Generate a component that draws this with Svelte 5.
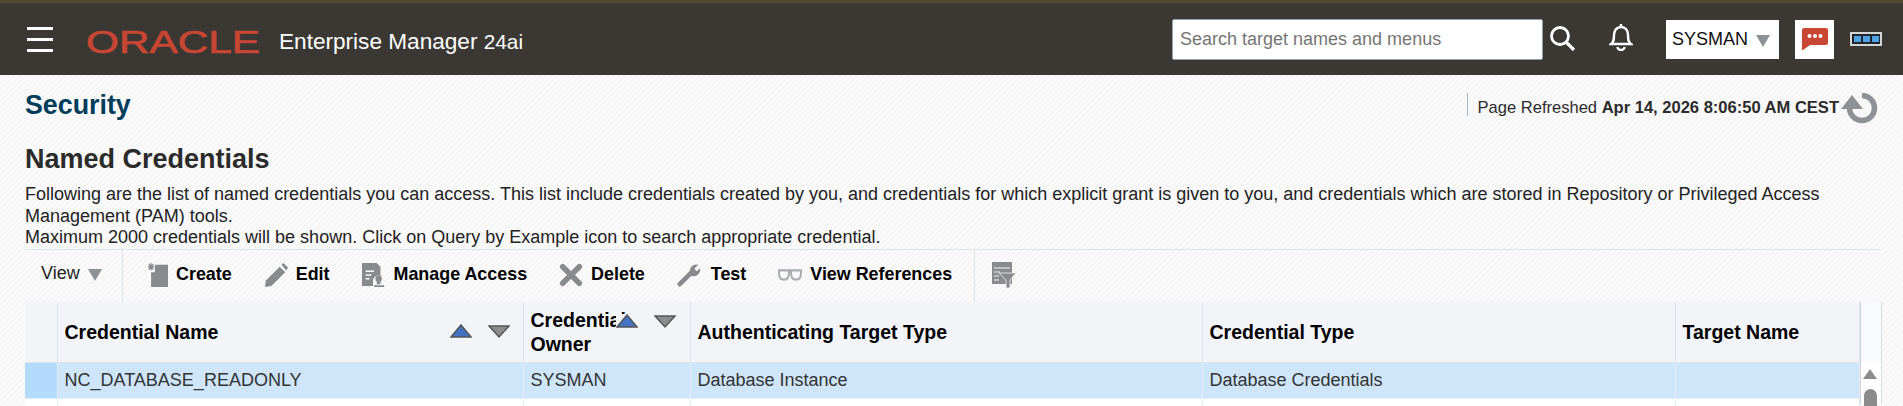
<script lang="ts">
    const actions = [
        { key: "create", label: "Create" },
        { key: "edit", label: "Edit" },
        { key: "access", label: "Manage Access" },
        { key: "delete", label: "Delete" },
        { key: "test", label: "Test" },
        { key: "refs", label: "View References" }
    ];
</script>

<div class="page">
    <header class="topbar">
        <button class="burger" aria-label="Menu"><span></span><span></span><span></span></button>
        <svg class="oracle" width="180" height="37" viewBox="0 0 180 37" aria-label="Oracle">
            <text x="0" y="29" textLength="174" lengthAdjust="spacingAndGlyphs" font-size="32" fill="#c74634" stroke="#c74634" stroke-width="0.700" font-family="Liberation Sans, sans-serif">ORACLE</text>
        </svg>
        <div class="product">Enterprise Manager <small>24ai</small></div>
        <div class="top-right">
            <input class="search" type="text" placeholder="Search target names and menus" />
            <svg class="search-icon" width="27" height="26" viewBox="0 0 27 26">
                <circle cx="11" cy="11" r="8.500" fill="none" stroke="#fff" stroke-width="2.800" />
                <path d="M17 17l8 8" stroke="#fff" stroke-width="3.200" />
            </svg>
            <svg class="bell" width="24" height="27" viewBox="0 0 24 27">
                <path d="M2 20c3-2 3-5 3-9 0-5 3-8 7-8s7 3 7 8c0 4 0 7 3 9z" fill="none" stroke="#fff" stroke-width="2.400" />
                <path d="M12 0v3" stroke="#fff" stroke-width="2.400" />
                <path d="M8.500 23a3.500 3 0 0 0 7 0" fill="none" stroke="#fff" stroke-width="2.400" />
            </svg>
            <div class="user">SYSMAN <i class="caret"></i></div>
            <div class="feedback">
                <svg width="26" height="22" viewBox="0 0 26 22">
                    <path d="M2 0h22a2 2 0 0 1 2 2v13a2 2 0 0 1-2 2H8l-7 5H0V2a2 2 0 0 1 2-2z" fill="#c74634" />
                    <circle cx="7.500" cy="8" r="2" fill="#fff" /><circle cx="13" cy="8" r="2" fill="#fff" /><circle cx="18.500" cy="8" r="2" fill="#fff" />
                </svg>
            </div>
            <div class="status"><span></span><span></span><span></span></div>
        </div>
    </header>

    <main class="content">
        <div class="title-row">
            <h1>Security</h1>
            <div class="refreshed">
                <span>Page Refreshed <b>Apr 14, 2026 8:06:50 AM CEST</b></span>
                <svg width="37" height="31" viewBox="0 0 37 31">
                    <path d="M21 2.500A12.500 12.500 0 1 1 8.500 15" fill="none" stroke="#8c9296" stroke-width="5.500" />
                    <path d="M0 16L11 2l11 14z" fill="#8c9296" />
                </svg>
            </div>
        </div>

        <h2>Named Credentials</h2>
        <p class="desc">Following are the list of named credentials you can access. This list include credentials created by you, and credentials for which explicit grant is given to you, and credentials which are stored in Repository or Privileged Access Management (PAM) tools.<br />Maximum 2000 credentials will be shown. Click on Query by Example icon to search appropriate credential.</p>

        <div class="toolbar">
            <div class="view">View <i class="caret"></i></div>
            <div class="actions">
                {#each actions as a}
                    <button class="action {a.key}">
                        <svg class="ico" viewBox="0 0 26 26" preserveAspectRatio="none">
                            {#if a.key === "create"}
                                <path d="M9 2h17v24H4V10h5z" fill="#878b8e" />
                                <path d="M4 0v8M0 4h8M1 1l6 6M7 1L1 7" stroke="#878b8e" stroke-width="1.500" />
                            {:else if a.key === "edit"}
                                <path d="M1 26l1-7L17 4l6 6L8 25z" fill="#878b8e" />
                                <path d="M19 2l2-2 5 5-2 3z" fill="#878b8e" />
                            {:else if a.key === "access"}
                                <path d="M0 0h16l4 4v10a6 6 0 0 0-8 7v4H0z" fill="#878b8e" />
                                <path d="M4 9h9M4 13h6M4 17h4" stroke="#fff" stroke-width="1.500" />
                                <circle cx="18" cy="17" r="3.500" fill="#878b8e" />
                                <path d="M16 20h4v3h-4zM13 24h11v2H13z" fill="#878b8e" />
                            {:else if a.key === "delete"}
                                <path d="M4 4l18 18M22 4L4 22" stroke="#878b8e" stroke-width="6" stroke-linecap="round" />
                            {:else if a.key === "test"}
                                <path d="M3 23L16 10" stroke="#878b8e" stroke-width="5" stroke-linecap="round" />
                                <path d="M14 10a7 7 0 0 1 9-8l-4 4 2 3 4-3a7 7 0 0 1-9 8z" fill="#878b8e" />
                            {:else}
                                <path d="M12 9h2" stroke="#a9adb0" stroke-width="2" />
                                <path d="M1 8h11c0 7-1 10-5.500 10S1 15 1 8zM14 8h11c0 7-1 10-5.500 10S14 15 14 8z" fill="none" stroke="#a9adb0" stroke-width="2.200" />
                            {/if}
                        </svg>
                        {a.label}
                    </button>
                {/each}
            </div>
            <div class="qbe">
                <svg width="24" height="26" viewBox="0 0 24 26">
                    <path d="M0 0h20v22H0z" fill="#878b8e" />
                    <path d="M2 6h16M2 10h6M2 14h5M2 18h5" stroke="#f4f4f4" stroke-width="1" />
                    <path d="M7 11h17l-6 7v8h-4v-8z" fill="#878b8e" stroke="#f4f4f4" stroke-width="0.800" />
                </svg>
            </div>
        </div>

        <div class="grid-wrap">
            <table>
                <colgroup>
                    <col style="width:32px" /><col style="width:466px" /><col style="width:167px" /><col style="width:512px" /><col style="width:473px" /><col style="width:184px" />
                </colgroup>
                <thead>
                    <tr>
                        <th></th>
                        <th>Credential Name
                            <span class="sort first">
                                <svg width="22" height="15" viewBox="0 0 22 15"><path d="M11 1l10 12H1z" fill="#4472c4" stroke="#555" stroke-width="1.500" /></svg>
                                <svg width="22" height="15" viewBox="0 0 22 15"><path d="M1 2h20L11 13z" fill="#8c8c8c" stroke="#555" stroke-width="1.500" /></svg>
                            </span>
                        </th>
                        <th class="owner">Credential Owner
                            <span class="sort second">
                                <svg width="22" height="15" viewBox="0 0 22 15"><path d="M11 1l10 12H1z" fill="#4472c4" stroke="#555" stroke-width="1.500" /></svg>
                                <svg width="22" height="15" viewBox="0 0 22 15"><path d="M1 2h20L11 13z" fill="#8c8c8c" stroke="#555" stroke-width="1.500" /></svg>
                            </span>
                        </th>
                        <th>Authenticating Target Type</th>
                        <th>Credential Type</th>
                        <th>Target Name</th>
                    </tr>
                </thead>
                <tbody>
                    <tr class="selected">
                        <td class="selector"></td>
                        <td>NC_DATABASE_READONLY</td>
                        <td>SYSMAN</td>
                        <td>Database Instance</td>
                        <td>Database Credentials</td>
                        <td></td>
                    </tr>
                    <tr><td></td><td></td><td></td><td></td><td></td><td></td></tr>
                </tbody>
            </table>
            <div class="scrollbar">
                <div class="scroll-head"></div>
                <i class="scroll-up"></i>
                <i class="scroll-thumb"></i>
            </div>
        </div>
    </main>
</div>

<style>
    :global(body) {
        margin: 0;
    }
    .page {
        height: 406px;
        overflow: hidden;
        font-family: "Liberation Sans", Arial, sans-serif;
        background: repeating-linear-gradient(-45deg, #f6f6f6 0 2px, #fafafa 2px 4px);
        color: #2b2b2b;
    }
    .topbar {
        height: 72px;
        border-top: 3px solid #4f4a2e;
        background: #3b3833;
        display: flex;
        align-items: center;
        color: #fff;
    }
    .burger {
        margin-left: 27px;
        width: 26px;
        padding: 0;
        border: 0;
        background: none;
        display: flex;
        flex-direction: column;
        gap: 8px;
    }
    .burger span {
        height: 3px;
        background: #fff;
    }
    .oracle {
        margin: 7px 0 0 33px;
    }
    .product {
        margin: 6px 0 0 13px;
        font-size: 22.600px;
    }
    .product small {
        font-size: 20.800px;
    }
    .top-right {
        margin-left: auto;
        display: flex;
        align-items: center;
        padding-right: 21px;
    }
    .search {
        box-sizing: border-box;
        width: 371px;
        height: 41px;
        margin-top: 1px;
        padding: 0 7px;
        border: 1px solid #8ea4b5;
        border-radius: 2px;
        font: 18px "Liberation Sans", Arial, sans-serif;
    }
    .search::placeholder {
        color: #757575;
    }
    .search-icon {
        margin: 0 0 2px 6px;
    }
    .bell {
        margin: 0 0 4px 33px;
    }
    .user {
        margin-left: 33px;
        box-sizing: border-box;
        width: 113px;
        height: 39px;
        padding-left: 6px;
        background: #fff;
        color: #111;
        font-size: 18px;
        display: flex;
        align-items: center;
        gap: 8px;
        white-space: nowrap;
    }
    .caret {
        display: inline-block;
        border-left: 7px solid transparent;
        border-right: 7px solid transparent;
        border-top: 12px solid #8c9296;
        margin-top: 3px;
    }
    .feedback {
        margin-left: 16px;
        width: 39px;
        height: 39px;
        background: #fff;
        display: flex;
        align-items: center;
        justify-content: center;
    }
    .status {
        margin-left: 16px;
        box-sizing: border-box;
        width: 32px;
        height: 14px;
        border: 2px solid #d4d6d6;
        background: #20262b;
        display: flex;
        align-items: center;
        justify-content: center;
        gap: 2px;
    }
    .status span {
        width: 7px;
        height: 6px;
        background: #4fa3e3;
    }
    .content {
        padding: 0 22px 0 25px;
    }
    .title-row {
        display: flex;
        justify-content: space-between;
        padding-top: 14px;
    }
    h1 {
        margin: 0;
        font-size: 26.800px;
        line-height: 32px;
        color: #003d5b;
    }
    .refreshed {
        display: flex;
        align-items: flex-start;
        margin-top: 4px;
        margin-right: 3px;
        font-size: 16.550px;
    }
    .refreshed span {
        border-left: 1px solid #a9b6c2;
        padding-left: 10px;
        height: 23px;
        line-height: 29px;
        margin-right: 2px;
    }
    h2 {
        margin: 19px 0 0;
        font-size: 27px;
        line-height: 32px;
        color: #2b2b2b;
    }
    .desc {
        margin: 9px 0 0;
        font-size: 18px;
        line-height: 21.500px;
        color: #222;
    }
    .toolbar {
        margin-top: 0;
        height: 52px;
        border-top: 1px solid #dbe3ea;
        display: flex;
        align-items: stretch;
    }
    .view {
        box-sizing: border-box;
        width: 98px;
        border-right: 1px solid #dbe3ea;
        padding: 0 0 4px 16px;
        display: flex;
        align-items: center;
        gap: 8px;
        font-size: 18px;
        color: #222;
    }
    .actions {
        display: flex;
        align-items: center;
        padding: 0 0 2px 25px;
        box-sizing: border-box;
        width: 852px;
        border-right: 1px solid #dbe3ea;
        gap: 32px;
    }
    .action {
        display: flex;
        align-items: center;
        gap: 8px;
        padding: 0;
        border: 0;
        background: none;
        font: bold 17.900px "Liberation Sans", Arial, sans-serif;
        color: #000;
        white-space: nowrap;
    }
    .ico {
        width: 24px;
        height: 24px;
    }
    .create .ico {
        width: 20px;
    }
    .test {
        gap: 10px;
    }
    .qbe {
        padding: 12px 0 0 17px;
    }
    .grid-wrap {
        display: flex;
        align-items: flex-start;
    }
    table {
        width: 1834px;
        table-layout: fixed;
        border-collapse: collapse;
        font-size: 18px;
    }
    th {
        position: relative;
        height: 61px;
        padding: 0 7px;
        box-sizing: border-box;
        background: #f2f4f8;
        border-right: 1px solid #dbe3ea;
        border-bottom: 1px solid #dbe3ea;
        text-align: left;
        font-size: 19.500px;
        line-height: 24px;
        color: #000;
    }
    th.owner {
        padding-right: 80px;
    }
    td {
        height: 36px;
        padding: 0 7px;
        box-sizing: border-box;
        border-right: 1px solid #e6edf3;
        color: #333;
    }
    tbody tr:last-child td {
        background: #fff;
        height: 40px;
    }
    .selected td {
        background: #cfe6fa;
        border-bottom: 1px solid #e3eef6;
    }
    .selected .selector {
        background: #b3dbfd;
    }
    .sort {
        position: absolute;
        display: flex;
        gap: 16px;
        background: #f2f4f8;
    }
    .sort.first {
        right: 13px;
        top: 22px;
    }
    .sort.second {
        right: 14px;
        top: 12px;
    }
    .scrollbar {
        box-sizing: border-box;
        width: 22px;
        height: 102px;
        position: relative;
        background: #fff;
        border-right: 1px solid #d6dde3;
        border-left: 1px solid #d0d4d8;
        flex: none;
    }
    .scroll-head {
        height: 61px;
        background: #f9fafd;
    }
    .scroll-up {
        position: absolute;
        left: 2px;
        top: 67px;
        border-left: 7px solid transparent;
        border-right: 7px solid transparent;
        border-bottom: 10px solid #8c8c8c;
    }
    .scroll-thumb {
        position: absolute;
        left: 3px;
        top: 87px;
        width: 13px;
        height: 40px;
        border-radius: 7px 7px 0 0;
        background: #8c8c8c;
    }
</style>
